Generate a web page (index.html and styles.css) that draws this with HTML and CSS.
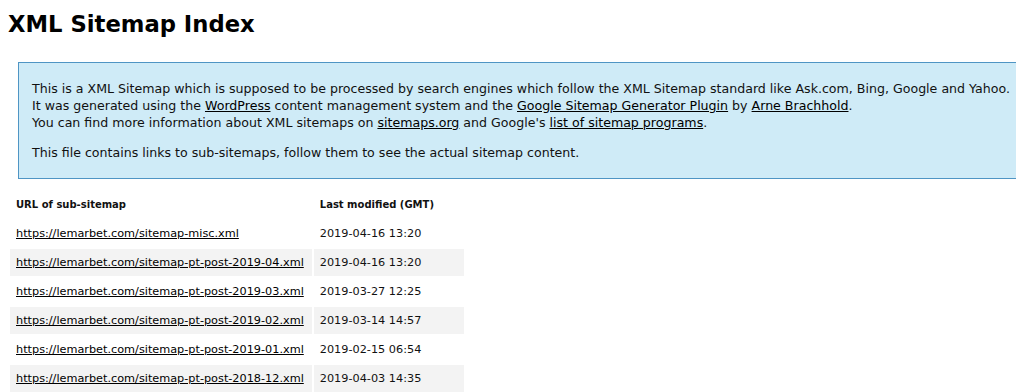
FILE: index.html
```html
<!DOCTYPE html>
<html lang="en">
<head>
<meta charset="utf-8">
<title>XML Sitemap Index</title>
<link rel="stylesheet" href="styles.css">
</head>
<body>
<h1 class="title">XML Sitemap Index</h1>
<div class="intro">
  <p>This is a XML Sitemap which is supposed to be processed by search engines which follow the XML Sitemap standard like Ask.com, Bing, Google and Yahoo.<br>
  It was generated using the <a href="#">WordPress</a> content management system and the <a href="#">Google Sitemap Generator Plugin</a> by <a href="#">Arne Brachhold</a>.<br>
  You can find more information about XML sitemaps on <a href="#">sitemaps.org</a> and Google's <a href="#">list of sitemap programs</a>.</p>
  <p>This file contains links to sub-sitemaps, follow them to see the actual sitemap content.</p>
</div>
<div class="content">
  <table class="sitemaps">
    <tr><th>URL of sub-sitemap</th><th>Last modified (GMT)</th></tr>
    <tr><td><a href="#">https://lemarbet.com/sitemap-misc.xml</a></td><td>2019-04-16 13:20</td></tr>
    <tr class="high"><td><a href="#">https://lemarbet.com/sitemap-pt-post-2019-04.xml</a></td><td>2019-04-16 13:20</td></tr>
    <tr><td><a href="#">https://lemarbet.com/sitemap-pt-post-2019-03.xml</a></td><td>2019-03-27 12:25</td></tr>
    <tr class="high"><td><a href="#">https://lemarbet.com/sitemap-pt-post-2019-02.xml</a></td><td>2019-03-14 14:57</td></tr>
    <tr><td><a href="#">https://lemarbet.com/sitemap-pt-post-2019-01.xml</a></td><td>2019-02-15 06:54</td></tr>
    <tr class="high"><td><a href="#">https://lemarbet.com/sitemap-pt-post-2018-12.xml</a></td><td>2019-04-03 14:35</td></tr>
  </table>
</div>
</body>
</html>
```
FILE: styles.css
```css
html, body {
  overflow: hidden;
}
body {
  margin: 8px;
  font-family: "DejaVu Sans", Verdana, sans-serif;
  font-size: 12.6px;
  color: #111;
  background: #fff;
}
.title {
  margin: 0 0 22px 0;
  font-size: 22.7px;
  line-height: 32px;
  font-weight: bold;
  color: #000;
}
.intro {
  background-color: #cfebf7;
  border: 1px solid #4f95c4;
  padding: 5px 13px 3px 13px;
  margin: 10px;
  width: 1020px;
  box-sizing: border-box;
}
.intro p {
  margin: 13px 0;
  line-height: 16.87px;
}
a {
  color: #000;
}
.sitemaps {
  border-spacing: 2px;
}
.sitemaps th {
  text-align: left;
  padding: 6px 30px 6px 6px;
  font-size: 10px;
  line-height: 15px;
  font-weight: bold;
}
.sitemaps td {
  padding: 6px 8px 6px 6px;
  font-size: 11.27px;
  line-height: 15px;
}
.sitemaps tr.high td {
  background-color: #f3f3f3;
}
```
